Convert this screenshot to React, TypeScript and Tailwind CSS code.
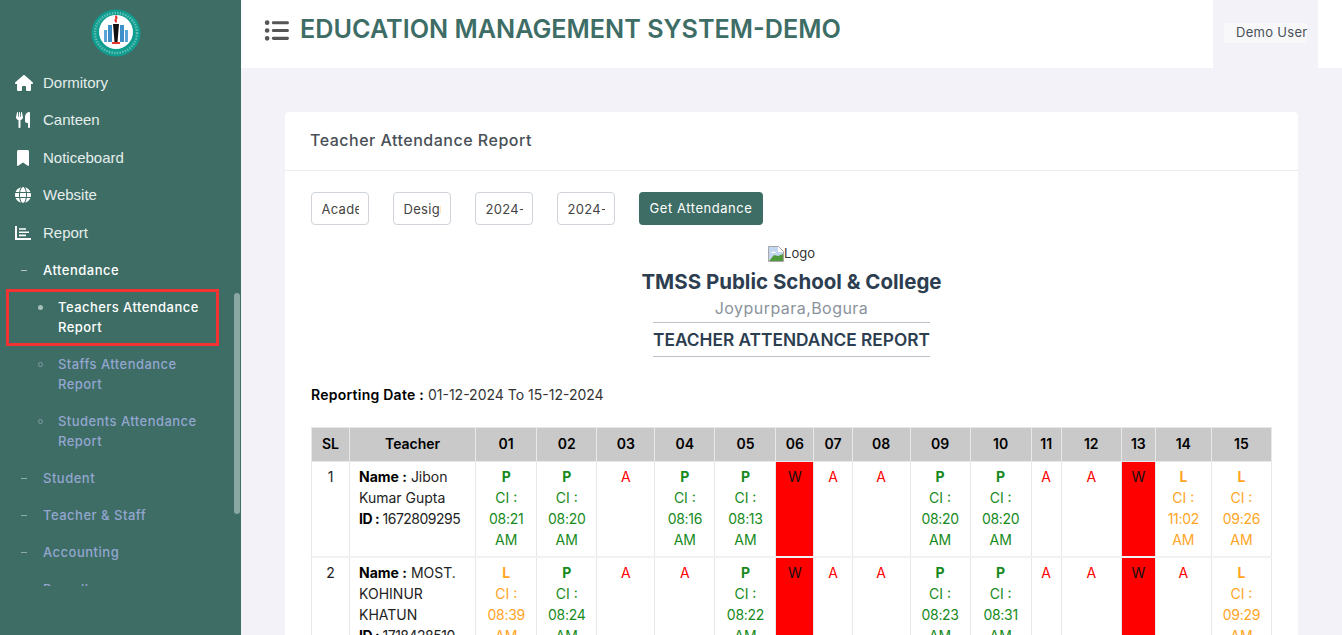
import React from "react";
import { FaBookmark, FaGlobe, FaHouse, FaListUl, FaUtensils } from "react-icons/fa6";

const poppins = "font-['Inter','Liberation_Sans',sans-serif]";

const Logo = () => (
  <svg width="50" height="48" viewBox="0 0 50 48">
    <ellipse cx="25" cy="24" rx="24.5" ry="23.5" fill="#0f9d8f" />
    <ellipse cx="25" cy="24" rx="21" ry="20" fill="none" stroke="#d7efe9" strokeWidth="2.5" strokeDasharray="1.5 1.2" opacity="0.4" />
    <circle cx="25" cy="23" r="17" fill="#fff" />
    <rect x="13" y="21" width="3" height="12" fill="#5aa5d8" />
    <rect x="17" y="16" width="4" height="17" fill="#3f8fca" />
    <rect x="29" y="16" width="4" height="17" fill="#3f8fca" />
    <rect x="34" y="21" width="3" height="12" fill="#5aa5d8" />
    <path d="M22 15h6l-1.5 18h-3z" fill="#111" />
    <path d="M25 6c2 2 2 3 .5 5 1 1 .5 2-.5 3-2-2-2-3-.5-5-1-1-.5-2 .5-3z" fill="#e5342d" />
    <rect x="21" y="33" width="8" height="2" fill="#e5342d" />
  </svg>
);

const BrokenImage = () => (
  <svg width="16" height="16" viewBox="0 0 16 16" className="shrink-0">
    <path d="M0.5 0.5h10l5 5v10h-15z" fill="#fff" stroke="#a8a8a8" />
    <path d="M1 1h9v5h5v3l-14 5z" fill="#c3d6f2" />
    <path d="M1 15l5-6 4 1 5-2v7z" fill="#4f9a3a" />
    <path d="M3 7c1-2 4-2 5 0z" fill="#fff" />
  </svg>
);

const ReportIcon = () => (
  <svg width="16" height="14" viewBox="0 0 16 14" fill="currentColor">
    <path d="M0 0h2v12h14v2H0z" />
    <path d="M4 2.2h7v1.6H4zM4 5.4h10v1.6H4zM4 8.6h7v1.6H4z" />
  </svg>
);

const mainMenu = [
  { label: "Dormitory", icon: <FaHouse size={18} /> },
  { label: "Canteen", icon: <FaUtensils size={16} /> },
  { label: "Noticeboard", icon: <FaBookmark size={16} /> },
  { label: "Website", icon: <FaGlobe size={16} /> },
  { label: "Report", icon: <ReportIcon /> },
];

const SubItem = ({ label, active }: { label: string; active?: boolean }) => (
  <div className={`h-[37px] flex items-center pl-[21px] text-[13px] tracking-[0.5px] font-medium ${active ? "text-white" : "text-[#93a6cf]"}`}>
    <span className={`w-[6px] h-px mr-4 ${active ? "bg-[#b5c9c4]" : "bg-[#8fa8b0]"}`} />
    {label}
  </div>
);

const LeafItem = ({ first, second, active }: { first: string; second: string; active?: boolean }) => (
  <div className={`relative flex pl-[38px] h-[57px] pt-[9px] text-[13px] tracking-[0.45px] leading-[19.5px] font-medium ${active ? "text-white" : "text-[#93a6cf]"}`}>
    {active ? (
      <span className="w-[5px] h-[5px] mt-[7px] mr-[15px] rounded-full bg-[#a9bfba]" />
    ) : (
      <span className="w-[5px] h-[5px] mt-[7px] mr-[15px] rounded-full border border-[#7f9ba6]" />
    )}
    <div>
      {first}
      <br />
      {second}
    </div>
    {active && <span className="absolute left-[6px] right-[22px] top-0 bottom-0 border-[3px] border-[#f33333]" />}
  </div>
);

const Sidebar = () => (
  <aside className="relative w-[241px] shrink-0 h-full bg-[#3d6d65]">
    <div className="h-[64px] pt-[9px] pr-[10px] flex justify-center">
      <Logo />
    </div>
    <div className="h-[522px] overflow-hidden">
      <nav className="font-['Liberation_Sans',sans-serif]">
        {mainMenu.map((item) => (
          <div key={item.label} className="h-[37.5px] flex items-center pl-[15px] text-[15px] text-[#e6eeec]">
            <span className="w-[28px] flex text-white">{item.icon}</span>
            {item.label}
          </div>
        ))}
      </nav>
      <div className={`mt-[0.6px] ${poppins}`}>
        <SubItem label="Attendance" active />
        <LeafItem first="Teachers Attendance" second="Report" active />
        <LeafItem first="Staffs Attendance" second="Report" />
        <LeafItem first="Students Attendance" second="Report" />
        <SubItem label="Student" />
        <SubItem label="Teacher & Staff" />
        <SubItem label="Accounting" />
        <SubItem label="Payroll" />
      </div>
    </div>
    <div className="absolute right-[1px] top-[293px] w-[6px] h-[221px] rounded-full bg-[#8aa8a2]" />
  </aside>
);

const Header = () => (
  <header className={`h-[68px] shrink-0 bg-white flex ${poppins}`}>
    <div className="flex-1 flex items-center pl-[23px] pb-[8px]">
      <FaListUl size={25} className="text-[#555]" />
      <h1 className="ml-[11px] text-[25.2px] font-semibold text-[#3d6d65]">EDUCATION MANAGEMENT SYSTEM-DEMO</h1>
    </div>
    <div className="w-[105px] bg-[#f2f2f8] pt-[23px] pl-[11px]">
      <div className="w-[83px] h-[20px] bg-[#f8f8fb] pl-[12px] text-[13px] tracking-[0.3px] leading-[19px] text-[#4b5058] whitespace-nowrap">Demo User</div>
    </div>
    <div className="w-[24px]" />
  </header>
);

type Mark = { s: "P" | "L"; t: string } | "A" | "W";

const rows: { sl: number; name: string; id: string; marks: Mark[] }[] = [
  {
    sl: 1,
    name: "Jibon Kumar Gupta",
    id: "1672809295",
    marks: [
      { s: "P", t: "08:21" },
      { s: "P", t: "08:20" },
      "A",
      { s: "P", t: "08:16" },
      { s: "P", t: "08:13" },
      "W",
      "A",
      "A",
      { s: "P", t: "08:20" },
      { s: "P", t: "08:20" },
      "A",
      "A",
      "W",
      { s: "L", t: "11:02" },
      { s: "L", t: "09:26" },
    ],
  },
  {
    sl: 2,
    name: "MOST. KOHINUR KHATUN",
    id: "1718428510",
    marks: [
      { s: "L", t: "08:39" },
      { s: "P", t: "08:24" },
      "A",
      "A",
      { s: "P", t: "08:22" },
      "W",
      "A",
      "A",
      { s: "P", t: "08:23" },
      { s: "P", t: "08:31" },
      "A",
      "A",
      "W",
      "A",
      { s: "L", t: "09:29" },
    ],
  },
];

const days = ["01", "02", "03", "04", "05", "06", "07", "08", "09", "10", "11", "12", "13", "14", "15"];
const dayWidths = [61, 60, 58, 60, 61, 38, 38, 58, 60, 61, 30, 60, 34, 56, 60];

const MarkCell = ({ mark }: { mark: Mark }) => {
  if (mark === "A") return <td className="border border-[#e8e8e8] align-top text-center pt-[4px] pb-[5px] text-[#ff0000]">A</td>;
  if (mark === "W") return <td className="border border-[#e8e8e8] align-top text-center pt-[4px] pb-[5px] bg-[#ff0000] text-[#111]">W</td>;
  const color = mark.s === "P" ? "text-[#178a1c]" : "text-[#ffa526]";
  return (
    <td className={`border border-[#e8e8e8] align-top text-center pt-[4px] pb-[5px] ${color}`}>
      <div className="font-bold">{mark.s}</div>
      <div>CI :</div>
      <div className="tracking-[-0.3px]">{mark.t}</div>
      <div>AM</div>
    </td>
  );
};

const ReportTable = () => (
  <table className="table-fixed w-[961px] border-collapse text-[14px] leading-[21px] text-[#222]">
    <colgroup>
      <col className="w-[38px]" />
      <col className="w-[126px]" />
      {dayWidths.map((w, i) => (
        <col key={i} style={{ width: w }} />
      ))}
    </colgroup>
    <thead>
      <tr className="h-[34px] bg-[#c9c9c9] text-black font-semibold">
        <th className="border border-[#e8e8e8] font-semibold pb-[2px]">SL</th>
        <th className="border border-[#e8e8e8] font-semibold pb-[2px]">Teacher</th>
        {days.map((d) => (
          <th key={d} className="border border-[#e8e8e8] font-semibold pb-[2px]">{d}</th>
        ))}
      </tr>
    </thead>
    <tbody>
      {rows.map((r) => (
        <tr key={r.sl} className="h-[95px] border-b-2 border-[#f1f1f1]">
          <td className="border border-[#e8e8e8] align-top text-center pt-[4px] pb-[5px]">{r.sl}</td>
          <td className="border border-[#e8e8e8] align-top pt-[4px] pb-[5px] pl-[9px] pr-[8px]">
            <b className="font-bold text-black">Name :</b> {r.name}
            <br />
            <span className="whitespace-nowrap tracking-[-0.5px]">
              <b className="font-bold text-black">ID :</b> {r.id}
            </span>
          </td>
          {r.marks.map((m, i) => (
            <MarkCell key={i} mark={m} />
          ))}
        </tr>
      ))}
    </tbody>
  </table>
);

const inputClass = "w-[58px] h-[33px] px-[9.5px] bg-white border border-[#ced4da] rounded-[4px] text-[13px] tracking-[0.3px] text-[#444] outline-none";

const ReportCard = () => (
  <section className="w-[1013px] bg-white rounded-[4px]">
    <div className="h-[59px] border-b border-[#ebebf0] pl-[25px] pb-[2px] flex items-center text-[16px] tracking-[0.5px] font-medium text-[#495057]">
      Teacher Attendance Report
    </div>
    <div className="px-[26px] pt-[21px]">
      <div className="flex gap-[24px]">
        <input readOnly value="Academic Year" className={inputClass} />
        <input readOnly value="Designation" className={inputClass} />
        <input readOnly value="2024-12-01" className={inputClass} />
        <input readOnly value="2024-12-15" className={inputClass} />
        <button className="w-[124px] h-[33px] rounded-[4px] bg-[#3d6d65] text-white text-[13px] tracking-[0.55px]">Get Attendance</button>
      </div>
      <div className="flex flex-col items-center mt-[19px]">
        <div className="flex items-center h-[20px] text-[13px] text-[#333]">
          <BrokenImage />
          Logo
        </div>
        <div className="mt-[3px] text-[20.5px] leading-[30px] font-bold text-[#2c3e50]">TMSS Public School &amp; College</div>
        <div className="text-[16px] tracking-[0.45px] leading-[22px] text-[#8a939b]">Joypurpara,Bogura</div>
        <div className="mt-[3px] w-[277px] h-[35px] border-y border-[#bcc2c8] text-center text-[17.3px] leading-[33px] font-semibold text-[#2c3e50] whitespace-nowrap">
          TEACHER ATTENDANCE REPORT
        </div>
      </div>
      <p className="mt-[27px] text-[14px] leading-[21px] text-[#333]">
        <b className="font-semibold text-black tracking-[0.25px]">Reporting Date :</b> 01-12-2024 To 15-12-2024
      </p>
      <div className="mt-[22px]">
        <ReportTable />
      </div>
    </div>
  </section>
);

export default function App() {
  return (
    <div className="w-[1342px] h-[635px] overflow-hidden flex bg-[#f2f2f8]">
      <Sidebar />
      <main className="flex-1 min-w-0 flex flex-col">
        <Header />
        <div className={`pt-[44px] pl-[44px] ${poppins}`}>
          <ReportCard />
        </div>
      </main>
    </div>
  );
}
